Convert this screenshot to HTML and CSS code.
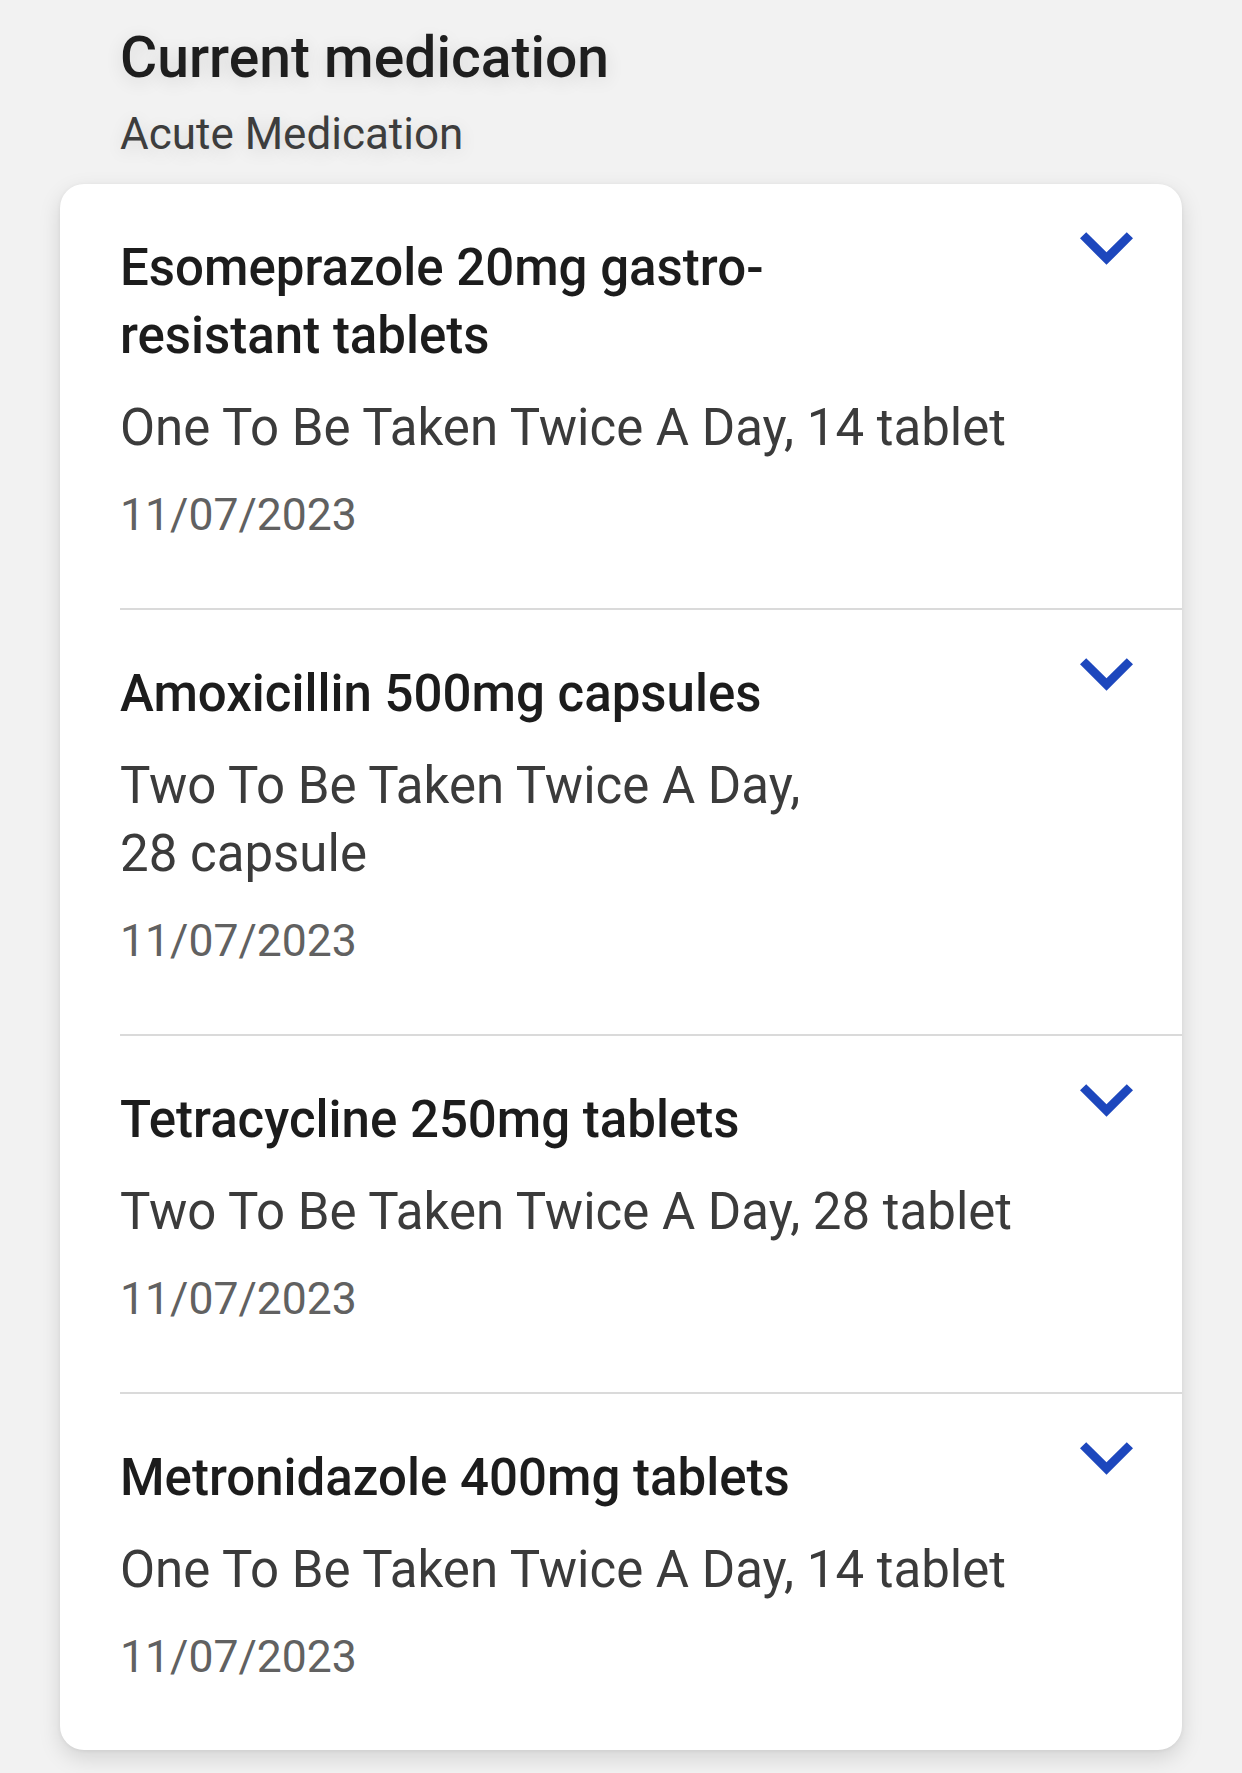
FILE: index.html
```html
<!DOCTYPE html>
<html lang="en">
<head>
<meta charset="utf-8">
<title>Current medication</title>
<link rel="stylesheet" href="styles.css">
</head>
<body>
<main class="page">
  <header class="header">
    <h1 class="title">Current medication</h1>
    <p class="subtitle">Acute Medication</p>
  </header>
  <section class="card">
    <article class="item">
      <div class="head">
        <h2 class="name">Esomeprazole 20mg gastro-resistant tablets</h2>
        <svg class="chev" viewBox="6 8.59 12 7.41" aria-hidden="true"><path d="M16.59 8.59L12 13.17 7.41 8.59 6 10l6 6 6-6z"/></svg>
      </div>
      <p class="sig">One To Be Taken Twice A Day, 14&nbsp;tablet</p>
      <p class="date">11/07/2023</p>
    </article>
    <article class="item">
      <div class="head">
        <h2 class="name">Amoxicillin 500mg capsules</h2>
        <svg class="chev" viewBox="6 8.59 12 7.41" aria-hidden="true"><path d="M16.59 8.59L12 13.17 7.41 8.59 6 10l6 6 6-6z"/></svg>
      </div>
      <p class="sig">Two To Be Taken Twice A Day, 28&nbsp;capsule</p>
      <p class="date">11/07/2023</p>
    </article>
    <article class="item">
      <div class="head">
        <h2 class="name">Tetracycline 250mg tablets</h2>
        <svg class="chev" viewBox="6 8.59 12 7.41" aria-hidden="true"><path d="M16.59 8.59L12 13.17 7.41 8.59 6 10l6 6 6-6z"/></svg>
      </div>
      <p class="sig">Two To Be Taken Twice A Day, 28&nbsp;tablet</p>
      <p class="date">11/07/2023</p>
    </article>
    <article class="item">
      <div class="head">
        <h2 class="name">Metronidazole 400mg tablets</h2>
        <svg class="chev" viewBox="6 8.59 12 7.41" aria-hidden="true"><path d="M16.59 8.59L12 13.17 7.41 8.59 6 10l6 6 6-6z"/></svg>
      </div>
      <p class="sig">One To Be Taken Twice A Day, 14&nbsp;tablet</p>
      <p class="date">11/07/2023</p>
    </article>
  </section>
</main>
</body>
</html>
```
FILE: styles.css
```css
html, body {
  margin: 0;
  padding: 0;
  background: #f2f2f2;
}
body {
  font-family: Roboto, "Noto Sans", "Liberation Sans", sans-serif;
  width: 1242px;
  min-height: 1773px;
}
.page {
  padding-top: 26px;
}
.header {
  padding-left: 120px;
}
.title {
  margin: 0;
  font-size: 57px;
  line-height: 64px;
  font-weight: 500;
  color: #1e1e1e;
  text-shadow: 0 4px 18px rgba(0, 0, 0, 0.12);
}
.subtitle {
  margin: 16px 0 0;
  font-size: 44px;
  line-height: 56px;
  font-weight: 400;
  color: #3d3d3d;
  text-shadow: 0 4px 18px rgba(0, 0, 0, 0.12);
}
.card {
  margin: 22px 60px 0;
  background: #ffffff;
  border-radius: 24px;
  box-shadow: 0 8px 22px rgba(0, 0, 0, 0.13), 0 1px 4px rgba(0, 0, 0, 0.06);
  overflow: hidden;
}
.item {
  margin-left: 60px;
  padding: 50px 49px 63px 0;
}
.item + .item {
  border-top: 2px solid #dadada;
}
.head {
  display: flex;
  justify-content: space-between;
  align-items: flex-start;
}
.name {
  margin: 0;
  max-width: 790px;
  font-size: 51px;
  line-height: 68px;
  font-weight: 500;
  color: #1c1c1c;
}
.chev {
  width: 53px;
  height: 33px;
  margin-top: -2px;
  flex: none;
  fill: #1d47bd;
}
.sig {
  margin: 24px 0 0;
  max-width: 920px;
  font-size: 51px;
  line-height: 68px;
  color: #3b3b3b;
  text-wrap: pretty;
}
.date {
  margin: 23px 0 0;
  font-size: 44.5px;
  line-height: 60px;
  color: #616161;
}
```
